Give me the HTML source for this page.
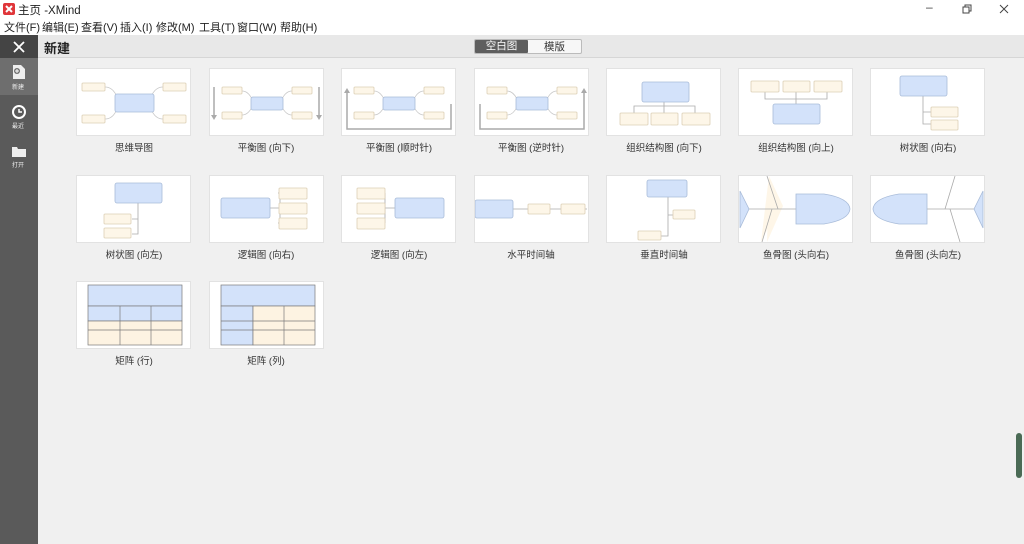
<!DOCTYPE html>
<html><head><meta charset="utf-8"><style>
*{margin:0;padding:0;box-sizing:border-box}
body{width:1024px;height:544px;overflow:hidden;background:#f0f0f0;font-family:"Liberation Sans","Noto Sans CJK SC",sans-serif;position:relative;color:#222}
.title{position:absolute;left:0;top:0;width:1024px;height:18px;background:#fff}
.menu{position:absolute;left:0;top:18px;width:1024px;height:17px;background:#fff;font-size:11px}
.menu span{position:absolute;top:1px}
.side{position:absolute;left:0;top:35px;width:38px;height:509px;background:#5a5a5a}
.hdr{position:absolute;left:38px;top:35px;width:986px;height:23px;background:#e8e8e8;border-bottom:1px solid #d6d6d6}
.card{position:absolute;width:115px;height:68px;background:#fff;border:1px solid #e2e2e2}
.card svg{display:block}
.lbl{position:absolute;width:140px;text-align:center;font-size:9.5px;color:#333}
</style></head><body>
<div class="title">
<svg style="position:absolute;left:3px;top:3px" width="12" height="12"><rect width="12" height="12" rx="2" fill="#e0363a"/><path d="M3 3 L9 9 M9 3 L3 9" stroke="#fff" stroke-width="2"/></svg>
<span style="position:absolute;left:18px;top:2px;font-size:11.5px">主页 -XMind</span>
<span style="position:absolute;left:926px;top:0px;font-size:12px;color:#444">–</span>
<svg style="position:absolute;left:962px;top:4px" width="10" height="10"><rect x="1" y="3" width="6" height="6" fill="none" stroke="#444"/><path d="M3 3V1H9V7H7" fill="none" stroke="#444"/></svg>
<svg style="position:absolute;left:999px;top:4px" width="10" height="10"><path d="M1 1L9 9M9 1L1 9" stroke="#444"/></svg>
</div>
<div class="menu">
<span style="left:4px">文件(F)</span><span style="left:42px">编辑(E)</span><span style="left:81px">查看(V)</span><span style="left:120px">插入(I)</span><span style="left:156px">修改(M)</span><span style="left:199px">工具(T)</span><span style="left:237px">窗口(W)</span><span style="left:280px">帮助(H)</span>
</div>
<div class="side">
<div style="position:absolute;left:0;top:0;width:38px;height:23px;background:#444"></div>
<svg style="position:absolute;left:13px;top:6px" width="12" height="12"><path d="M1 1L11 11M11 1L1 11" stroke="#fff" stroke-width="1.8"/></svg>
<div style="position:absolute;left:0;top:23px;width:38px;height:37px;background:#6e6e6e"></div>
<svg style="position:absolute;left:12px;top:29px" width="14" height="16"><path d="M1 1H9L13 5V15H1Z" fill="#eee"/><circle cx="5" cy="7" r="3" fill="#6e6e6e"/><path d="M5 5V9M3 7H7" stroke="#fff"/></svg>
<span style="position:absolute;left:12px;top:47px;font-size:6px;color:#eee">新建</span>
<svg style="position:absolute;left:12px;top:70px" width="14" height="14"><circle cx="7" cy="7" r="6" fill="none" stroke="#fff" stroke-width="2"/><path d="M7 4V7H10" stroke="#fff" stroke-width="1.5" fill="none"/></svg>
<span style="position:absolute;left:12px;top:86px;font-size:6px;color:#eee">最近</span>
<svg style="position:absolute;left:11px;top:110px" width="16" height="13"><path d="M1 2H6L7 4H15V12H1Z" fill="#eee"/></svg>
<span style="position:absolute;left:12px;top:125px;font-size:6px;color:#eee">打开</span>
</div>
<div class="hdr">
<span style="position:absolute;left:6px;top:3px;font-size:13px;font-weight:bold;color:#222">新建</span>
<div style="position:absolute;left:436px;top:4px;width:108px;height:15px;border:1px solid #bbb;border-radius:2px;background:#f7f7f7"></div>
<div style="position:absolute;left:437px;top:5px;width:53px;height:13px;background:#5e5e5e;border-radius:1px;color:#fff;font-size:10.5px;text-align:center;line-height:13px">空白图</div>
<span style="position:absolute;left:506px;top:4px;font-size:10.5px;color:#333">模版</span>
</div>
<div style="position:absolute;left:1016px;top:433px;width:6px;height:45px;background:#4a6a55;border-radius:3px"></div>

<!-- Row 1 -->
<div class="card" style="left:76px;top:68px"><svg width="113" height="66" viewBox="0 0 113 66" fill="#fdf6e8" stroke="#dccfb5" stroke-width="0.8">
<path d="M28 18 Q36 18 40 28 M28 50 Q36 50 40 40 M86 18 Q78 18 74 28 M86 50 Q78 50 74 40" fill="none" stroke="#c8c8c8"/>
<rect x="5" y="14" width="23" height="8" rx="1"/><rect x="5" y="46" width="23" height="8" rx="1"/><rect x="86" y="14" width="23" height="8" rx="1"/><rect x="86" y="46" width="23" height="8" rx="1"/>
<rect x="38" y="25" width="39" height="18" rx="2" fill="#d3e2fa" stroke="#a9bcd9"/></svg></div>
<div class="card" style="left:209px;top:68px"><svg width="113" height="66" viewBox="0 0 113 66" fill="#fdf6e8" stroke="#dccfb5" stroke-width="0.8">
<path d="M4 18V48 M109 18V48" stroke="#aaa" stroke-width="1.5"/><path d="M1 46L4 51L7 46Z M106 46L109 51L112 46Z" fill="#aaa" stroke="none"/>
<path d="M32 22 Q38 22 42 30 M32 46 Q38 46 42 38 M82 22 Q76 22 72 30 M82 46 Q76 46 72 38" fill="none" stroke="#c8c8c8"/>
<rect x="12" y="18" width="20" height="7" rx="1"/><rect x="12" y="43" width="20" height="7" rx="1"/><rect x="82" y="18" width="20" height="7" rx="1"/><rect x="82" y="43" width="20" height="7" rx="1"/>
<rect x="41" y="28" width="32" height="13" rx="2" fill="#d3e2fa" stroke="#a9bcd9"/></svg></div>
<div class="card" style="left:341px;top:68px"><svg width="113" height="66" viewBox="0 0 113 66" fill="#fdf6e8" stroke="#dccfb5" stroke-width="0.8">
<path d="M5 22V60H109V35" fill="none" stroke="#aaa" stroke-width="1.5"/><path d="M2 24L5 19L8 24Z" fill="#aaa" stroke="none"/>
<path d="M32 22 Q38 22 42 30 M32 46 Q38 46 42 38 M82 22 Q76 22 72 30 M82 46 Q76 46 72 38" fill="none" stroke="#c8c8c8"/>
<rect x="12" y="18" width="20" height="7" rx="1"/><rect x="12" y="43" width="20" height="7" rx="1"/><rect x="82" y="18" width="20" height="7" rx="1"/><rect x="82" y="43" width="20" height="7" rx="1"/>
<rect x="41" y="28" width="32" height="13" rx="2" fill="#d3e2fa" stroke="#a9bcd9"/></svg></div>
<div class="card" style="left:474px;top:68px"><svg width="113" height="66" viewBox="0 0 113 66" fill="#fdf6e8" stroke="#dccfb5" stroke-width="0.8">
<path d="M5 35V60H109V22" fill="none" stroke="#aaa" stroke-width="1.5"/><path d="M106 24L109 19L112 24Z" fill="#aaa" stroke="none"/>
<path d="M32 22 Q38 22 42 30 M32 46 Q38 46 42 38 M82 22 Q76 22 72 30 M82 46 Q76 46 72 38" fill="none" stroke="#c8c8c8"/>
<rect x="12" y="18" width="20" height="7" rx="1"/><rect x="12" y="43" width="20" height="7" rx="1"/><rect x="82" y="18" width="20" height="7" rx="1"/><rect x="82" y="43" width="20" height="7" rx="1"/>
<rect x="41" y="28" width="32" height="13" rx="2" fill="#d3e2fa" stroke="#a9bcd9"/></svg></div>
<div class="card" style="left:606px;top:68px"><svg width="113" height="66" viewBox="0 0 113 66" fill="#fdf6e8" stroke="#dccfb5" stroke-width="0.8">
<path d="M57 33V37 M27 44V37H88V44 M57 37V44" fill="none" stroke="#aaa"/>
<rect x="35" y="13" width="47" height="20" rx="2" fill="#d3e2fa" stroke="#a9bcd9"/>
<rect x="13" y="44" width="28" height="12" rx="1"/><rect x="44" y="44" width="27" height="12" rx="1"/><rect x="75" y="44" width="28" height="12" rx="1"/></svg></div>
<div class="card" style="left:738px;top:68px"><svg width="113" height="66" viewBox="0 0 113 66" fill="#fdf6e8" stroke="#dccfb5" stroke-width="0.8">
<path d="M26 23V30H88V23 M57 23V35" fill="none" stroke="#aaa"/>
<rect x="12" y="12" width="28" height="11" rx="1"/><rect x="44" y="12" width="27" height="11" rx="1"/><rect x="75" y="12" width="28" height="11" rx="1"/>
<rect x="34" y="35" width="47" height="20" rx="2" fill="#d3e2fa" stroke="#a9bcd9"/></svg></div>
<div class="card" style="left:870px;top:68px"><svg width="113" height="66" viewBox="0 0 113 66" fill="#fdf6e8" stroke="#dccfb5" stroke-width="0.8">
<path d="M52 27V55H60 M52 43H60" fill="none" stroke="#aaa"/>
<rect x="29" y="7" width="47" height="20" rx="2" fill="#d3e2fa" stroke="#a9bcd9"/>
<rect x="60" y="38" width="27" height="10" rx="1"/><rect x="60" y="51" width="27" height="10" rx="1"/></svg></div>

<!-- Row 2 -->
<div class="card" style="left:76px;top:175px"><svg width="113" height="66" viewBox="0 0 113 66" fill="#fdf6e8" stroke="#dccfb5" stroke-width="0.8">
<path d="M61 27V58H55 M61 43H55" fill="none" stroke="#aaa"/>
<rect x="38" y="7" width="47" height="20" rx="2" fill="#d3e2fa" stroke="#a9bcd9"/>
<rect x="27" y="38" width="27" height="10" rx="1"/><rect x="27" y="52" width="27" height="10" rx="1"/></svg></div>
<div class="card" style="left:209px;top:175px"><svg width="113" height="66" viewBox="0 0 113 66" fill="#fdf6e8" stroke="#dccfb5" stroke-width="0.8">
<path d="M60 32H70 M70 17V47 M70 17H68 M70 47H68" fill="none" stroke="#aaa"/>
<rect x="11" y="22" width="49" height="20" rx="2" fill="#d3e2fa" stroke="#a9bcd9"/>
<rect x="69" y="12" width="28" height="11" rx="1"/><rect x="69" y="27" width="28" height="11" rx="1"/><rect x="69" y="42" width="28" height="11" rx="1"/></svg></div>
<div class="card" style="left:341px;top:175px"><svg width="113" height="66" viewBox="0 0 113 66" fill="#fdf6e8" stroke="#dccfb5" stroke-width="0.8">
<path d="M43 32H53 M43 17V47" fill="none" stroke="#aaa"/>
<rect x="53" y="22" width="49" height="20" rx="2" fill="#d3e2fa" stroke="#a9bcd9"/>
<rect x="15" y="12" width="28" height="11" rx="1"/><rect x="15" y="27" width="28" height="11" rx="1"/><rect x="15" y="42" width="28" height="11" rx="1"/></svg></div>
<div class="card" style="left:474px;top:175px"><svg width="113" height="66" viewBox="0 0 113 66" fill="#fdf6e8" stroke="#dccfb5" stroke-width="0.8">
<path d="M38 33H112" stroke="#aaa"/>
<rect x="0" y="24" width="38" height="18" rx="2" fill="#d3e2fa" stroke="#a9bcd9"/>
<rect x="53" y="28" width="22" height="10" rx="1"/><rect x="86" y="28" width="24" height="10" rx="1"/></svg></div>
<div class="card" style="left:606px;top:175px"><svg width="113" height="66" viewBox="0 0 113 66" fill="#fdf6e8" stroke="#dccfb5" stroke-width="0.8">
<path d="M61 21V60H54 M61 39H66" fill="none" stroke="#aaa"/>
<rect x="40" y="4" width="40" height="17" rx="2" fill="#d3e2fa" stroke="#a9bcd9"/>
<rect x="66" y="34" width="22" height="9" rx="1"/><rect x="31" y="55" width="23" height="9" rx="1"/></svg></div>
<div class="card" style="left:738px;top:175px"><svg width="113" height="66" viewBox="0 0 113 66" fill="#fdf6e8" stroke="#dccfb5" stroke-width="0.8">
<path d="M30 0L40 30L22 66 M30 0L44 30 L28 66" fill="#fdf0d8" stroke="none" opacity="0.6"/>
<path d="M8 33H58 M28 0L39 33 M23 66L33 33" fill="none" stroke="#aaa"/>
<path d="M1 15L10 33L1 52Z" fill="#d3e2fa" stroke="#a9bcd9"/>
<path d="M57 18H85Q110 22 111 33Q110 44 85 48H57Z" fill="#d3e2fa" stroke="#a9bcd9"/></svg></div>
<div class="card" style="left:870px;top:175px"><svg width="113" height="66" viewBox="0 0 113 66" fill="#fdf6e8" stroke="#dccfb5" stroke-width="0.8">
<path d="M55 33H104 M84 0L74 33 M89 66L79 33" fill="none" stroke="#aaa"/>
<path d="M112 15L103 33L112 52Z" fill="#d3e2fa" stroke="#a9bcd9"/>
<path d="M56 18H28Q3 22 2 33Q3 44 28 48H56Z" fill="#d3e2fa" stroke="#a9bcd9"/></svg></div>

<!-- Row 3 -->
<div class="card" style="left:76px;top:281px"><svg width="113" height="66" viewBox="0 0 113 66" stroke="#7a7a7a" stroke-width="0.7">
<rect x="11" y="3" width="94" height="21" fill="#d3e2fa"/>
<rect x="11" y="24" width="94" height="15" fill="#d3e2fa"/>
<rect x="11" y="39" width="94" height="24" fill="#fdf3e2"/>
<path d="M11 48H105 M43 24V63 M74 24V63" fill="none"/></svg></div>
<div class="card" style="left:209px;top:281px"><svg width="113" height="66" viewBox="0 0 113 66" stroke="#7a7a7a" stroke-width="0.7">
<rect x="11" y="3" width="94" height="21" fill="#d3e2fa"/>
<rect x="11" y="24" width="32" height="39" fill="#d3e2fa"/>
<rect x="43" y="24" width="62" height="39" fill="#fdf3e2"/>
<path d="M11 39H105 M11 48H105 M74 24V63" fill="none"/></svg></div>

<div class="lbl" style="left:64px;top:140px">思维导图</div>
<div class="lbl" style="left:196px;top:140px">平衡图 (向下)</div>
<div class="lbl" style="left:329px;top:140px">平衡图 (顺时针)</div>
<div class="lbl" style="left:461px;top:140px">平衡图 (逆时针)</div>
<div class="lbl" style="left:594px;top:140px">组织结构图 (向下)</div>
<div class="lbl" style="left:726px;top:140px">组织结构图 (向上)</div>
<div class="lbl" style="left:858px;top:140px">树状图 (向右)</div>
<div class="lbl" style="left:64px;top:247px">树状图 (向左)</div>
<div class="lbl" style="left:196px;top:247px">逻辑图 (向右)</div>
<div class="lbl" style="left:329px;top:247px">逻辑图 (向左)</div>
<div class="lbl" style="left:461px;top:247px">水平时间轴</div>
<div class="lbl" style="left:594px;top:247px">垂直时间轴</div>
<div class="lbl" style="left:726px;top:247px">鱼骨图 (头向右)</div>
<div class="lbl" style="left:858px;top:247px">鱼骨图 (头向左)</div>
<div class="lbl" style="left:64px;top:353px">矩阵 (行)</div>
<div class="lbl" style="left:196px;top:353px">矩阵 (列)</div>
</body></html>
